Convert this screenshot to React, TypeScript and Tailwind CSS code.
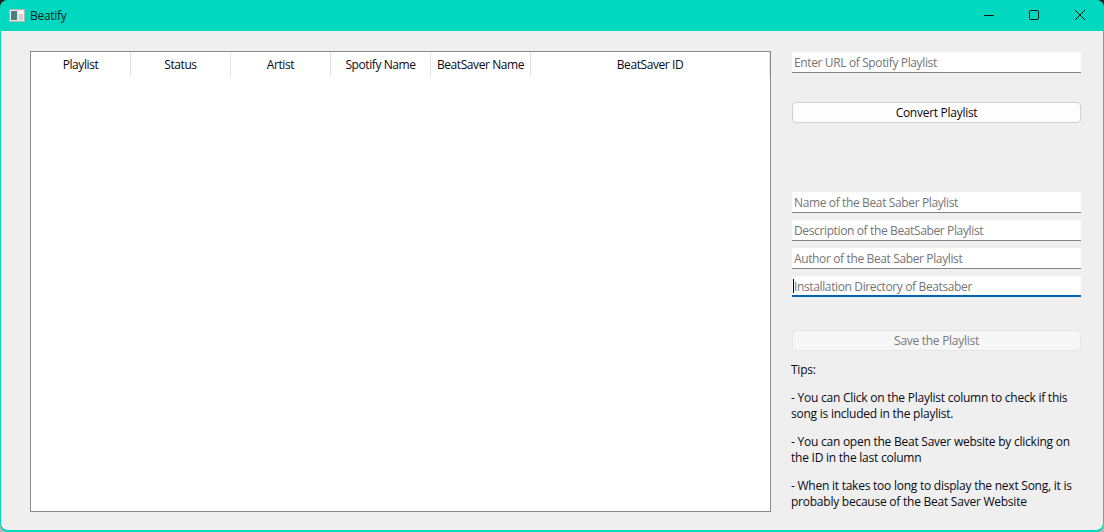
const FONT = "font-['Open_Sans','Noto_Sans',sans-serif] tracking-[-0.28px]";

const COLUMNS = [
  { label: "Playlist", width: "w-[100px]" },
  { label: "Status", width: "w-[100px]" },
  { label: "Artist", width: "w-[100px]" },
  { label: "Spotify Name", width: "w-[100px]" },
  { label: "BeatSaver Name", width: "w-[100px]" },
  { label: "BeatSaver ID", width: "w-[239px]" },
];

function WindowIcon() {
  return (
    <svg width="16" height="14" viewBox="0 0 16 14" className="shrink-0">
      <rect x="0.5" y="0.5" width="15" height="12" fill="#e8e8e8" stroke="#b5b5b5" />
      <rect x="2" y="2" width="6" height="9" fill="#4e7f7c" />
      <rect x="10" y="2" width="4" height="3" fill="#ffffff" />
      <rect x="10" y="5" width="4" height="6" fill="#c9d3d3" />
    </svg>
  );
}

function TitleBar() {
  return (
    <div className="flex h-[31px] shrink-0 items-center bg-[#00d8c0] pl-[9px] rounded-t-[8px]">
      <WindowIcon />
      <span className="ml-[5px] text-[12px] text-[#06241f]">Beatify</span>
      <div className="ml-auto flex h-full items-start pt-[10px]">
        <div className="flex w-[46px] justify-center">
          <svg width="12" height="12" viewBox="0 0 12 12" className="block">
            <path d="M1 5.5h10" stroke="#111" strokeWidth="1" />
          </svg>
        </div>
        <div className="flex w-[46px] justify-center">
          <svg width="12" height="12" viewBox="0 0 12 12" className="block">
            <rect x="0.5" y="0.5" width="9" height="9" rx="1" fill="none" stroke="#111" strokeWidth="1" />
          </svg>
        </div>
        <div className="flex w-[46px] justify-center">
          <svg width="12" height="12" viewBox="0 0 12 12" className="block">
            <path d="M0 0l10 10M10 0L0 10" stroke="#111" strokeWidth="1" />
          </svg>
        </div>
      </div>
    </div>
  );
}

function LineInput({ text, focused = false }: { text: string; focused?: boolean }) {
  return (
    <div
      className={
        focused
          ? "relative flex h-[21px] items-center border-b-2 border-[#0063b1] bg-white pl-[2px] pt-[2px] text-[12px] tracking-[-0.37px] text-[#757575]"
          : "relative flex h-[21px] items-center border-b border-[#858585] bg-white pl-[2px] pt-[2px] text-[12px] tracking-[-0.37px] text-[#757575]"
      }
    >
      {focused && <span className="absolute left-[1px] top-[3px] h-[14px] w-px bg-black" />}
      <span className="whitespace-nowrap">{text}</span>
    </div>
  );
}

export default function App() {
  return (
    <div className={`${FONT} h-[532px] w-[1104px] overflow-hidden bg-[linear-gradient(#222222,#222222_50%,#b5b5b5_50%)]`}>
      <div className="flex h-full flex-col rounded-[8px] bg-[#00d8c0]">
        <TitleBar />
        <div className="mx-px mb-[2px] flex flex-1 rounded-b-[7px] bg-[#efefef] pl-[29px] pt-[20px]">
          {/* table */}
          <div className="h-[461px] w-[741px] border border-[#8a8a8e] bg-white">
            <div className="flex h-[24px]">
              {COLUMNS.map((col) => (
                <div
                  key={col.label}
                  className={`${col.width} flex items-center justify-center border-r border-[#e3e3e3] pt-[2px] text-[12px] tracking-[-0.42px] text-[#0a0a14]`}
                >
                  {col.label}
                </div>
              ))}
            </div>
          </div>

          {/* right column */}
          <div className="ml-[21px] flex w-[289px] flex-col pt-px">
            <LineInput text="Enter URL of Spotify Playlist" />
            <button className="mt-[29px] flex h-[21px] items-center justify-center rounded-[4px] border border-[#d0d0d0] bg-[#fdfdfd] text-[12px] text-[#0a0a14]">
              Convert Playlist
            </button>
            <div className="mt-[69px] flex flex-col gap-[7px]">
              <LineInput text="Name of the Beat Saber Playlist" />
              <LineInput text="Description of the BeatSaber Playlist" />
              <LineInput text="Author of the Beat Saber Playlist" />
              <LineInput text="Installation Directory of Beatsaber" focused />
            </div>
            <button className="mt-[33px] flex h-[21px] items-center justify-center rounded-[4px] border border-[#e6e6e6] bg-[#f6f6f6] text-[12px] text-[#7a7a7a]">
              Save the Playlist
            </button>
            <div className="-ml-px mt-[11px] flex flex-col gap-[12px] text-[12px] leading-[16px] tracking-[-0.24px] text-[#0a0a14]">
              <p>Tips:</p>
              <p>- You can Click on the Playlist column to check if this song is included in the playlist.</p>
              <p>- You can open the Beat Saver website by clicking on the ID in the last column</p>
              <p>- When it takes too long to display the next Song, it is probably because of the Beat Saver Website</p>
            </div>
          </div>
        </div>
      </div>
    </div>
  );
}
